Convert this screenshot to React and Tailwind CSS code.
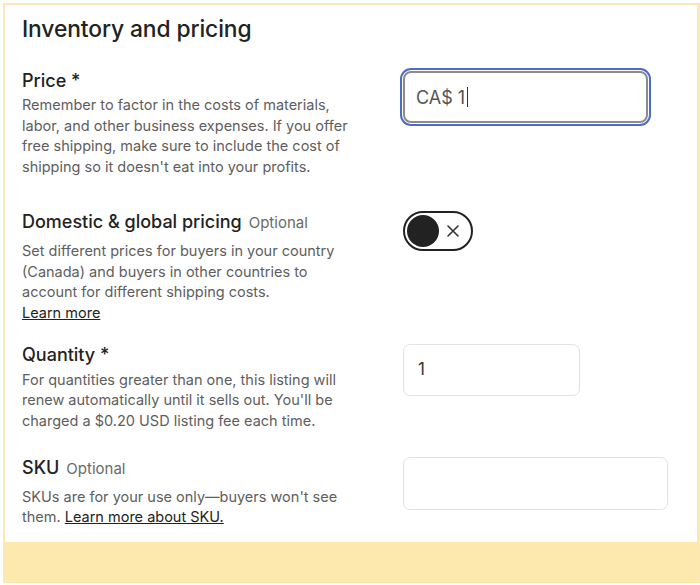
import React from 'react';

const Label = ({ children, optional }) => (
  <div className="flex items-baseline gap-[7px] leading-[24px]">
    <span className="text-[18px] font-medium text-[#222]">{children}</span>
    {optional && <span className="text-[15px] text-[#6a6a6a]">Optional</span>}
  </div>
);

const Desc = ({ children, className = '' }) => (
  <p className={`text-[14.5px] leading-[20.7px] text-[#5e5e5e] ${className}`}>{children}</p>
);

export default function App() {
  return (
    <div className="w-[700px] h-[585px] bg-white pl-[3px] pt-[3px] pb-[2px]" style={{ fontFamily: 'Inter, "Noto Sans", sans-serif' }}>
      <div className="h-full border-2 border-r-[3px] border-b-0 border-[#fbe8b6] flex flex-col">
        <div className="flex-1 bg-white pl-[17px] pr-[28px]">
          <h1 className="mt-[10px] text-[22.8px] leading-[28px] font-medium text-[#222] tracking-[-0.1px]">
            Inventory and pricing
          </h1>

          {/* Price */}
          <div className="mt-[26px] flex">
            <div className="w-[378px]">
              <Label>Price *</Label>
              <Desc className="mt-[2px] w-[345px]">
                Remember to factor in the costs of materials, labor, and other business expenses. If you offer free
                shipping, make sure to include the cost of shipping so it doesn't eat into your profits.
              </Desc>
            </div>
            <div className="-mt-[1px] w-[251px] h-[58px] rounded-[11px] border-2 border-[#4f6bc9] p-[1px]">
              <div className="h-full rounded-[8px] border-2 border-[#8c8c8c] flex items-center pl-[11px] text-[18px] text-[#555]">
                CA$ 1<span className="ml-[2px] w-[1px] h-[20px] bg-[#333]" />
              </div>
            </div>
          </div>

          {/* Domestic & global */}
          <div className="mt-[32px] flex">
            <div className="w-[381px]">
              <Label optional>Domestic &amp; global pricing</Label>
              <Desc className="mt-[6px] w-[340px]">
                Set different prices for buyers in your country (Canada) and buyers in other countries to account for
                different shipping costs.
                <br />
                <a href="#" className="underline text-[#222]">Learn more</a>
              </Desc>
            </div>
            <div className="mt-[1px] w-[70px] h-[40px] rounded-full border-2 border-[#222] p-[2px] flex items-center">
              <div className="w-[32px] h-[32px] rounded-full bg-[#222]" />
              <svg className="ml-[7px]" width="14" height="14" viewBox="0 0 14 14" fill="none" stroke="#333" strokeWidth="1.6" strokeLinecap="round">
                <path d="M2 2L12 12M12 2L2 12" />
              </svg>
            </div>
          </div>

          {/* Quantity */}
          <div className="mt-[19px] flex">
            <div className="w-[381px]">
              <Label>Quantity *</Label>
              <Desc className="mt-[3px] w-[348px]">
                For quantities greater than one, this listing will renew automatically until it sells out. You'll be
                charged a $0.20 USD listing fee each time.
              </Desc>
            </div>
            <div className="mt-[1px] w-[177px] h-[52px] rounded-[7px] border-[1.5px] border-[#e2e2e2] flex items-center pl-[14px] text-[17px] text-[#333]">
              1
            </div>
          </div>

          {/* SKU */}
          <div className="mt-[24px] flex">
            <div className="w-[381px]">
              <Label optional>SKU</Label>
              <Desc className="mt-[6px] w-[340px]">
                SKUs are for your use only—buyers won't see them.{' '}
                <a href="#" className="underline text-[#222]">Learn more about SKU.</a>
              </Desc>
            </div>
            <div className="mt-[1px] w-[265px] h-[53px] rounded-[7px] border-[1.5px] border-[#e2e2e2]" />
          </div>
        </div>
        <div className="h-[41px] bg-[#fde8ad]" />
      </div>
    </div>
  );
}
